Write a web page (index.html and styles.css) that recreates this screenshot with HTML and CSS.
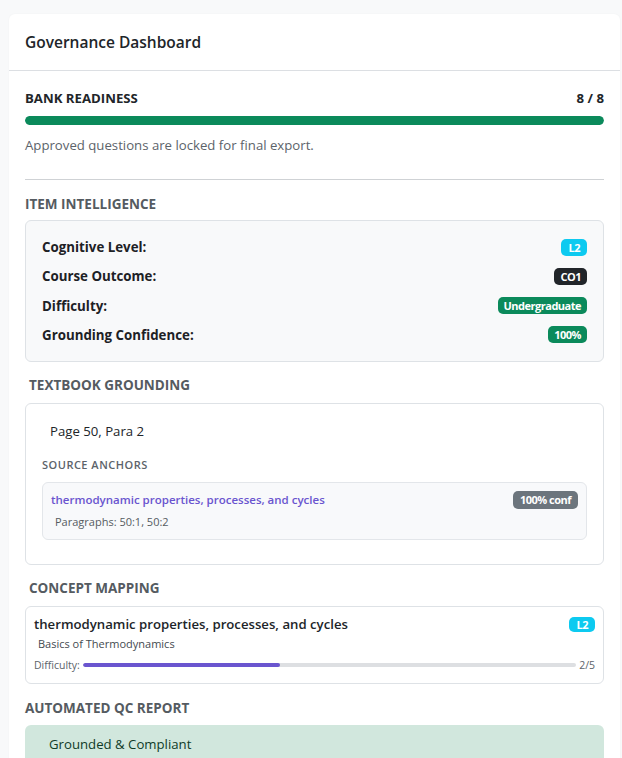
FILE: index.html
```html
<!DOCTYPE html>
<html lang="en">
<head>
<meta charset="utf-8">
<title>Governance Dashboard</title>
<link rel="stylesheet" href="styles.css">
</head>
<body>
<div class="card">
  <div class="card-header">Governance Dashboard</div>
  <div class="card-body">
    <div class="readiness-row">
      <span class="readiness-title">BANK READINESS</span>
      <span class="readiness-count">8 / 8</span>
    </div>
    <div class="progress"><div class="progress-fill"></div></div>
    <p class="muted-note">Approved questions are locked for final export.</p>
    <hr class="divider">

    <h6 class="section-title">ITEM INTELLIGENCE</h6>
    <div class="intel-box">
      <div class="intel-row"><span class="intel-label">Cognitive Level:</span><span class="badge badge-info">L2</span></div>
      <div class="intel-row"><span class="intel-label">Course Outcome:</span><span class="badge badge-dark">CO1</span></div>
      <div class="intel-row"><span class="intel-label">Difficulty:</span><span class="badge badge-success">Undergraduate</span></div>
      <div class="intel-row"><span class="intel-label">Grounding Confidence:</span><span class="badge badge-success">100%</span></div>
    </div>

    <h6 class="section-title indented">TEXTBOOK GROUNDING</h6>
    <div class="ground-box">
      <div class="page-ref">Page 50, Para 2</div>
      <div class="anchors-label">SOURCE ANCHORS</div>
      <div class="anchor">
        <div class="anchor-top">
          <span class="anchor-topic">thermodynamic properties, processes, and cycles</span>
          <span class="badge badge-secondary">100% conf</span>
        </div>
        <div class="anchor-paras">Paragraphs: 50:1, 50:2</div>
      </div>
    </div>

    <h6 class="section-title indented">CONCEPT MAPPING</h6>
    <div class="concept-box">
      <div class="concept-top">
        <span class="concept-name">thermodynamic properties, processes, and cycles</span>
        <span class="badge badge-info">L2</span>
      </div>
      <div class="concept-sub">Basics of Thermodynamics</div>
      <div class="concept-diff">
        <span>Difficulty:</span>
        <div class="diff-track"><div class="diff-fill" style="width:40%"></div></div>
        <span>2/5</span>
      </div>
    </div>

    <h6 class="section-title">AUTOMATED QC REPORT</h6>
    <div class="qc-alert">Grounded &amp; Compliant</div>
  </div>
</div>
</body>
</html>
```
FILE: styles.css
```css
* { box-sizing: border-box; }
html, body { height: 100%; }
body {
  margin: 0;
  padding: 14px 2px 0 9px;
  background: #f8f9fa;
  font-family: "Open Sans", "Noto Sans", sans-serif;
  color: #212529;
  overflow: hidden;
}
.card {
  background: #fff;
  border-radius: 6px 6px 0 0;
  box-shadow: 0 0 2px rgba(0,0,0,0.04);
}
.card-header {
  height: 57px;
  padding: 0 16px;
  display: flex;
  align-items: center;
  font-size: 15.5px;
  font-weight: 600;
  border-bottom: 1px solid #dcdfe3;
}
.card-body {
  padding: 16px 16px 0 16px;
}
.readiness-row {
  display: flex;
  justify-content: space-between;
  line-height: 22px;
  font-size: 13.2px;
  font-weight: 700;
}
.progress {
  margin-top: 7px;
  height: 9px;
  border-radius: 5px;
  background: #e9ecef;
  overflow: hidden;
}
.progress-fill {
  width: 100%;
  height: 100%;
  background: #0b8a5b;
  border-radius: 5px;
}
.muted-note {
  margin: 10px 0 0;
  font-size: 13.2px;
  line-height: 20px;
  color: #5c636a;
}
.divider {
  margin: 24px 0 0;
  border: 0;
  border-top: 1px solid #cfd2d5;
}
.section-title {
  margin: 14px 0 0;
  font-size: 13.5px;
  line-height: 20px;
  font-weight: 700;
  color: #555b61;
}
.section-title.indented { padding-left: 4px; margin-top: 13px; }
.intel-box {
  margin-top: 6px;
  background: #f8f9fa;
  border: 1px solid #dee2e6;
  border-radius: 6px;
  padding: 16px 16px 16px;
  display: flex;
  flex-direction: column;
  gap: 9.3px;
}
.intel-row {
  display: flex;
  justify-content: space-between;
  align-items: center;
  height: 20px;
}
.intel-label {
  font-size: 13.3px;
  font-weight: 700;
  color: #1d2125;
}
.badge {
  display: inline-block;
  font-size: 11px;
  font-weight: 700;
  line-height: 17px;
  padding: 0 6px;
  border-radius: 5px;
  color: #fff;
  letter-spacing: -0.5px;
  white-space: nowrap;
}
.badge-info { background: #0dcaf0; padding: 0 7px; }
.badge-dark { background: #212529; }
.badge-success { background: #0b8a5b; }
.badge-secondary { background: #6c757d; line-height: 18px; padding: 0 7px; }
.ground-box {
  margin-top: 8px;
  border: 1px solid #dee2e6;
  border-radius: 6px;
  padding: 17px 16px 24px;
}
.page-ref {
  padding-left: 8px;
  font-size: 13.2px;
  line-height: 20px;
  font-weight: 500;
}
.anchors-label {
  margin-top: 16px;
  font-size: 11px;
  line-height: 16px;
  font-weight: 600;
  letter-spacing: 0.5px;
  color: #5c636a;
}
.anchor {
  margin-top: 9px;
  background: #f8f9fb;
  border: 1px solid #e3e6ea;
  border-radius: 6px;
  padding: 8px 8px 9px 8px;
}
.anchor-top {
  display: flex;
  justify-content: space-between;
  align-items: center;
  height: 18px;
}
.anchor-topic {
  font-size: 11.5px;
  font-weight: 600;
  color: #6a55cf;
}
.anchor-paras {
  margin-top: 5px;
  padding-left: 4px;
  font-size: 11px;
  line-height: 16px;
  color: #555b61;
}
.concept-box {
  margin-top: 8px;
  border: 1px solid #dee2e6;
  border-radius: 6px;
  padding: 7px 8px 10px;
}
.concept-top {
  display: flex;
  justify-content: space-between;
  align-items: center;
  height: 20px;
}
.concept-name {
  font-size: 13.2px;
  font-weight: 600;
}
.concept-top .badge { line-height: 15px; margin-top: 2px; }
.concept-sub {
  margin-top: 2px;
  padding-left: 4px;
  font-size: 11px;
  line-height: 16px;
  color: #444a50;
}
.concept-diff {
  margin-top: 5px;
  display: flex;
  align-items: center;
  gap: 3px;
  font-size: 10.5px;
  line-height: 16px;
  color: #5c636a;
}
.diff-track {
  flex: 1;
  height: 4px;
  background: #dddfe2;
  border-radius: 2px;
  overflow: hidden;
}
.diff-fill {
  height: 100%;
  background: #6a55cf;
  border-radius: 2px;
}
.qc-alert {
  margin-top: 7px;
  background: #d1e7dd;
  border-radius: 6px 6px 0 0;
  padding: 10px 24px 20px;
  font-size: 13.2px;
  line-height: 18px;
  color: #0f3b28;
}
```
